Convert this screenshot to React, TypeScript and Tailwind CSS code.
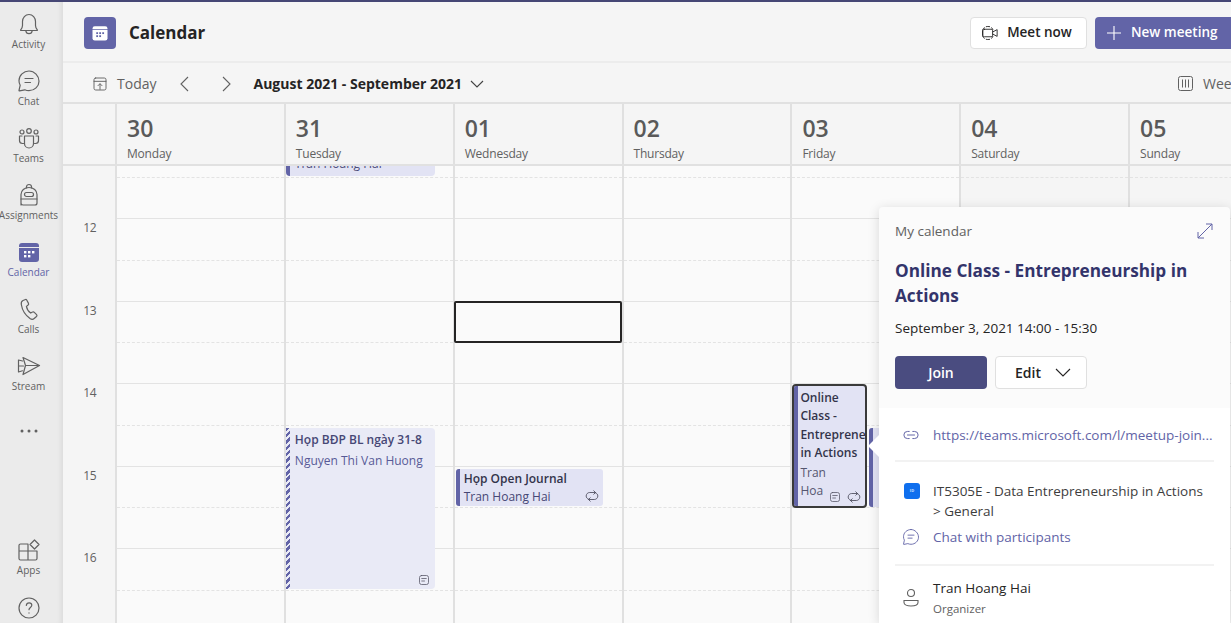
import type { ReactNode } from "react";

const gray = "#616161";

function Glyph({ size = 24, color = gray, sw = 1.2, children }: { size?: number; color?: string; sw?: number; children: ReactNode }) {
  return (
    <svg width={size} height={size} viewBox="0 0 24 24" fill="none" stroke={color} strokeWidth={sw} strokeLinecap="round" strokeLinejoin="round">
      {children}
    </svg>
  );
}

const BellIcon = () => (
  <Glyph>
    <path d="M4 18.500h16c.4 0 .5-.4.3-.7-1.200-1.400-1.800-2.600-1.800-4.300V9.500C18.500 5.600 15.700 2.500 12 2.500S5.500 5.600 5.500 9.500v4c0 1.700-.6 2.900-1.800 4.300-.2.3-.1.7.3.7Z" />
    <path d="M8.800 18.700c.2 1.800 1.500 3 3.200 3s3-1.200 3.200-3" />
  </Glyph>
);

const ChatIcon = ({ color = gray, size = 24 }: { color?: string; size?: number }) => (
  <Glyph color={color} size={size}>
    <path d="M12 2C6.500 2 2 6.300 2 11.700c0 1.600.4 3.200 1.200 4.500L2 21.500c0 .3.200.5.500.4l5.300-1.100c1.300.6 2.700.9 4.200.9 5.500 0 10-4.300 10-9.500S17.500 2 12 2Z" />
    <path d="M8 9.500h8M8 13.500h5.500" />
  </Glyph>
);

const TeamsIcon = () => (
  <Glyph>
    <circle cx="12" cy="5" r="2.300" />
    <circle cx="5" cy="6" r="2" />
    <circle cx="19" cy="6" r="2" />
    <path d="M7.500 10h9v7.500c0 2.500-2 4.500-4.500 4.500s-4.500-2-4.500-4.500V10Z" />
    <path d="M5 10H2.500v4.500c0 1.700 1.300 3 3 3h1M19 10h2.500v4.500c0 1.700-1.300 3-3 3h-1" />
  </Glyph>
);

const BagIcon = () => (
  <Glyph>
    <path d="M9.500 5V3.800C9.500 2.500 10.600 1.500 12 1.500s2.500 1 2.500 2.300V5" />
    <path d="M4 22V11.500C4 7.500 7.500 4.500 12 4.500s8 3 8 7V20c0 1.100-.9 2-2 2H6c-1.100 0-2-.9-2-2Z" />
    <rect x="7.500" y="9.500" width="9" height="4" rx="2" />
    <path d="M4 16h16" />
  </Glyph>
);

const CalendarGlyph = ({ size = 24, body = "#6264a7", dots = "#fff" }: { size?: number; body?: string; dots?: string }) => (
  <svg width={size} height={size} viewBox="0 0 24 24">
    <path d="M2 6a3 3 0 0 1 3-3h14a3 3 0 0 1 3 3v1H2V6Z" fill={body} />
    <path d="M2 8h20v11a3 3 0 0 1-3 3H5a3 3 0 0 1-3-3V8Z" fill={body} />
    <g fill={dots}>
      <rect x="7" y="11" width="2.400" height="2.400" />
      <rect x="11" y="11" width="2.400" height="2.400" />
      <rect x="15" y="11" width="2.400" height="2.400" />
      <rect x="7" y="15" width="2.400" height="2.400" />
      <rect x="11" y="15" width="2.400" height="2.400" />
    </g>
  </svg>
);

const PhoneIcon = () => (
  <Glyph>
    <path d="M8.500 2.500 6 3.500C4.500 4.300 4 5.700 4.300 7.500c.8 5 4.500 11 8.700 14 1.500 1 3 1 4.200 0l2.300-2c.6-.6.6-1.300.1-1.900l-2.300-2.300c-.5-.5-1.200-.6-1.800-.2l-1.800 1c-2.200-1.500-3.800-4.100-4.300-6.700l1.700-1.300c.5-.4.7-1.100.4-1.700L9.700 3c-.3-.5-.7-.7-1.200-.5Z" />
  </Glyph>
);

const StreamIcon = () => (
  <Glyph>
    <path d="M6 3.500 22.500 11.500 6 20.500l2.500-9L6 3.500Z" />
    <path d="M8.500 11.500h14M5.500 7 1.500 6v12l4-1.200M1.500 12h5" />
  </Glyph>
);

const AppsIcon = () => (
  <Glyph>
    <path d="M11 6H3.500C2.700 6 2 6.700 2 7.500V20.500C2 21.300 2.700 22 3.500 22H18.500c.8 0 1.500-.7 1.500-1.500V13H11V6ZM2 13h9M11 13v9" />
    <path d="m17.500 2 4.500 4.500-4.500 4.500L13 6.500 17.500 2Z" />
  </Glyph>
);

const HelpIcon = () => (
  <Glyph>
    <circle cx="12" cy="12" r="10" />
    <path d="M9.300 9.300c.2-1.500 1.300-2.500 2.800-2.500s2.700 1 2.700 2.400c0 2.200-2.800 2.300-2.800 4.500" />
    <path d="M12 16.800v.3" />
  </Glyph>
);

const TodayIcon = () => (
  <Glyph size={16} sw={1.4}>
    <rect x="3" y="3" width="18" height="18" rx="2.500" />
    <path d="M3 8h18M12 20v-8M9 14.500l3-3 3 3" />
  </Glyph>
);

const VideoIcon = () => (
  <Glyph size={18} color="#252424" sw={1.2}>
    <path d="M4.500 5C3 6 2 7 2 8.500v7c0 1.500 1 2.500 2.500 3.500M7 3.500c1-.3 3-.3 4.500 0M7 20.500c1 .3 3 .3 4.500 0M14 5c1.200.6 1.800 1.500 1.800 2.500M15.800 16.500c0 1-.6 1.900-1.800 2.500" />
    <rect x="2.500" y="7" width="13" height="10" rx="2" />
    <path d="m15.800 10.500 5.700-3v9l-5.700-3" />
  </Glyph>
);

const NoteIcon = ({ size = 12 }: { size?: number }) => (
  <Glyph size={size} sw={1.600} color="#5b5b6b">
    <rect x="3" y="3" width="18" height="18" rx="4" />
    <path d="M7.500 9h9M7.500 14h5.500" />
  </Glyph>
);

const RepeatIcon = () => (
  <Glyph size={14} sw={1.500} color="#4f4f5f">
    <path d="M6 17.500C3.500 16.500 2 14.500 2 12c0-3.300 2.700-6 6-6h10" />
    <path d="m15 3 3 3-3 3" />
    <path d="M18 6.500c2.500 1 4 3 4 5.500 0 3.300-2.700 6-6 6H6" />
    <path d="m9 15-3 3 3 3" />
  </Glyph>
);

const railItems = [
  { label: "Activity", icon: <BellIcon /> },
  { label: "Chat", icon: <ChatIcon /> },
  { label: "Teams", icon: <TeamsIcon /> },
  { label: "Assignments", icon: <BagIcon /> },
  { label: "Calendar", icon: <CalendarGlyph />, active: true },
  { label: "Calls", icon: <PhoneIcon /> },
  { label: "Stream", icon: <StreamIcon /> },
];

const days = [
  { num: "30", name: "Monday" },
  { num: "31", name: "Tuesday" },
  { num: "01", name: "Wednesday" },
  { num: "02", name: "Thursday" },
  { num: "03", name: "Friday" },
  { num: "04", name: "Saturday", weekend: true },
  { num: "05", name: "Sunday", weekend: true },
];

const halfHours = [0, 1, 2, 3, 4, 5, 6, 7, 8, 9, 10];

function Rail() {
  return (
    <aside className="flex w-[63px] shrink-0 flex-col items-center bg-[#ebebeb] pr-[6px] shadow-[inset_-5px_0_5px_-3px_rgba(0,0,0,0.07)]">
      <div className="mt-[10px] flex w-full flex-col">
        {railItems.map((item) => (
          <div key={item.label} className="flex h-[57px] flex-col items-center">
            {item.icon}
            <span className={`mt-[1px] whitespace-nowrap text-[10px] leading-[14px] ${item.active ? "text-[#6264a7]" : "text-[#616161]"}`}>{item.label}</span>
          </div>
        ))}
      </div>
      <div className="mt-[18px] text-[#616161]">
        <svg width="18" height="4" viewBox="0 0 18 4" fill="currentColor">
          <circle cx="2" cy="2" r="1.500" />
          <circle cx="9" cy="2" r="1.500" />
          <circle cx="16" cy="2" r="1.500" />
        </svg>
      </div>
      <div className="mt-[105px] flex flex-col items-center">
        <AppsIcon />
        <span className="mt-[1px] text-[10px] leading-[14px] text-[#616161]">Apps</span>
      </div>
      <div className="mt-[19px]">
        <HelpIcon />
      </div>
    </aside>
  );
}

function Header() {
  return (
    <header className="flex h-[61px] shrink-0 items-center border-b-2 border-[#ececec] pl-[21px] pt-[2px]">
      <div className="flex h-[32px] w-[32px] items-center justify-center rounded-[4px] bg-[#6264a7]">
        <CalendarGlyph size={18} body="#fff" dots="#6264a7" />
      </div>
      <h1 className="ml-[13px] mt-[1px] text-[17px] font-bold text-[#252424]">Calendar</h1>
      <button className="ml-auto flex h-[32px] w-[117px] items-center justify-center gap-[8px] rounded-[4px] border border-[#e0e0e0] bg-white pr-[4px] text-[13.5px] font-semibold text-[#252424]">
        <VideoIcon />
        Meet now
      </button>
      <button className="ml-[8px] flex h-[32px] w-[136px] items-center gap-[9px] rounded-l-[4px] bg-[#6264a7] pl-[11px] text-[13.5px] font-semibold text-white">
        <svg width="16" height="16" viewBox="0 0 16 16" stroke="#fff" strokeWidth="1.100">
          <path d="M8 1v14M1 8h14" />
        </svg>
        New meeting
      </button>
    </header>
  );
}

function Toolbar() {
  return (
    <div className="flex h-[41px] shrink-0 items-center overflow-hidden border-b-2 border-[#e1e1e1] pl-[29px] pt-[2px] text-[#616161]">
      <TodayIcon />
      <span className="ml-[9px] text-[14px]">Today</span>
      <svg className="ml-[22px]" width="10" height="16" viewBox="0 0 10 16" fill="none" stroke="#616161" strokeWidth="1.100">
        <path d="M9 1 2 8l7 7" />
      </svg>
      <svg className="ml-[33px]" width="10" height="16" viewBox="0 0 10 16" fill="none" stroke="#616161" strokeWidth="1.100">
        <path d="m1 1 7 7-7 7" />
      </svg>
      <span className="ml-[22px] text-[14px] font-bold text-[#252424]">August 2021 - September 2021</span>
      <svg className="ml-[8px]" width="14" height="8" viewBox="0 0 14 8" fill="none" stroke="#424242" strokeWidth="1.100">
        <path d="m1 1 6 6 6-6" />
      </svg>
      <div className="ml-auto mr-[-8px] flex shrink-0 items-center gap-[10px]">
        <svg width="15" height="15" viewBox="0 0 15 15" fill="none" stroke="#616161">
          <rect x="0.500" y="0.500" width="14" height="14" rx="2" />
          <path d="M4.500 3.500v8M7.500 3.500v8M10.500 3.500v8" />
        </svg>
        <span className="text-[14px]">Week</span>
      </div>
    </div>
  );
}

function DayHeaders() {
  return (
    <div className="grid h-[62px] shrink-0 grid-cols-[52px_repeat(7,168.85px)] border-b-2 border-[#e1e1e1]">
      <div />
      {days.map((d) => (
        <div key={d.num} className="border-l-2 border-[#e0e0e0] pl-[10px] pt-[8px] text-[#616161]">
          <div className="text-[23px] font-semibold leading-[32px] text-[#5a5a5a]">{d.num}</div>
          <div className="mt-[1px] text-[12px] leading-[17px] tracking-[-0.2px]">{d.name}</div>
        </div>
      ))}
    </div>
  );
}

function DayColumn({ weekend, children }: { weekend?: boolean; children?: ReactNode }) {
  return (
    <div className={`relative border-l-2 border-[#e0e0e0] ${weekend ? "bg-[#f5f5f5]" : "bg-[#fafafa]"}`}>
      <div className="h-[12px] border-b border-dashed border-[#e3e3e3]" />
      {halfHours.map((n) => (
        <div key={n} className={`h-[41.25px] border-b border-[#e3e3e3] ${n % 2 === 0 ? "border-solid" : "border-dashed"}`} />
      ))}
      {children}
    </div>
  );
}

function CalendarGrid() {
  return (
    <div className="grid min-h-0 flex-1 grid-cols-[52px_repeat(7,168.85px)] overflow-hidden">
      <div className="pt-[52px] text-right">
        {["12", "13", "14", "15", "16"].map((h) => (
          <div key={h} className="h-[82.5px] pr-[19px] pt-[1px] text-[12px] leading-[18px] tracking-[-0.5px] text-[#616161]">
            {h}
          </div>
        ))}
      </div>
      <DayColumn />
      <DayColumn>
        <div className="absolute left-0 top-0 flex h-[10px] w-[149px] overflow-hidden rounded-b-[4px] bg-[#e2e3f4]">
          <div className="w-[4px] shrink-0 bg-[#6264a7]" />
          <div className="ml-[5px] mt-[-11px] text-[12px] leading-[18px] text-[#4a4b78]">Tran Hoang Hai</div>
        </div>
        <div className="absolute left-0 top-[262px] flex h-[161px] w-[149px] rounded-r-[4px] bg-[#e9eaf6]">
          <div className="w-[4px] shrink-0 bg-[repeating-linear-gradient(135deg,#6264a7_0,#6264a7_2.500px,#e9eaf6_2.500px,#e9eaf6_4.500px)]" />
          <div className="pl-[5px] pt-[3px]">
            <div className="text-[12px] font-semibold leading-[18px] text-[#464775]">Họp BĐP BL ngày 31-8</div>
            <div className="mt-[3px] text-[12px] leading-[18px] text-[#585a96]">Nguyen Thi Van Huong</div>
          </div>
          <div className="absolute bottom-[3px] right-[5px]">
            <NoteIcon />
          </div>
        </div>
      </DayColumn>
      <DayColumn>
        <div className="absolute left-[1px] top-[303px] flex h-[37px] w-[147px] rounded-[3px] bg-[#e2e3f4]">
          <div className="w-[4px] shrink-0 rounded-l-[3px] bg-[#6264a7]" />
          <div className="pl-[4px] pt-[1px]">
            <div className="text-[12px] font-semibold leading-[18px] text-[#33344a]">Họp Open Journal</div>
            <div className="text-[12px] leading-[18px] text-[#464775]">Tran Hoang Hai</div>
          </div>
          <div className="absolute bottom-[3px] right-[4px]">
            <RepeatIcon />
          </div>
        </div>
        <div className="absolute left-[-1px] top-[135px] h-[42px] w-[168px] rounded-[2px] border-2 border-[#252424]" />
      </DayColumn>
      <DayColumn />
      <DayColumn>
        <div className="absolute left-0 top-[218px] flex h-[124px] w-[75px] overflow-hidden rounded-[4px] border-2 border-[#3a3a3a] bg-[#e2e3f4]">
          <div className="w-[4px] shrink-0 bg-[#6264a7]" />
          <div className="min-w-0 flex-1 overflow-hidden whitespace-nowrap pl-[2px] pt-[3px] text-[12px] leading-[18.4px]">
            <div className="font-semibold text-[#33344a]">Online</div>
            <div className="font-semibold text-[#33344a]">Class -</div>
            <div className="font-semibold text-[#33344a]">Entrepreneurship</div>
            <div className="font-semibold text-[#33344a]">in Actions</div>
            <div className="mt-[1px] text-[#55566f]">Tran</div>
            <div className="text-[#55566f]">Hoa</div>
          </div>
          <div className="absolute bottom-[2px] right-[4px] flex items-center gap-[6px] bg-[#e2e3f4]">
            <NoteIcon />
            <RepeatIcon />
          </div>
        </div>
        <div className="absolute left-[77px] top-[262px] flex h-[79px] w-[40px] rounded-[3px] bg-[#e2e3f4]">
          <div className="w-[4px] rounded-l-[3px] bg-[#6264a7]" />
        </div>
      </DayColumn>
      <DayColumn weekend />
      <DayColumn weekend />
    </div>
  );
}

function Popover() {
  return (
    <div className="absolute bottom-0 left-[879px] top-[207px] w-[351px] rounded-t-[4px] bg-[#fbfbfb] shadow-[0_2px_12px_rgba(0,0,0,0.14)]">
      <div className="absolute left-[-11px] top-[228px] h-0 w-0 border-y-[11px] border-r-[11px] border-y-transparent border-r-white" />
      <div className="px-[16px] pt-[14px]">
        <div className="flex items-start justify-between">
          <span className="text-[13.5px] leading-[20px] text-[#616161]">My calendar</span>
          <svg className="mr-[1px] mt-[2px]" width="16" height="16" viewBox="0 0 16 16" fill="none" stroke="#6264a7" strokeWidth="1">
            <path d="M1 15 15 1M9 1h6v6M1 9v6h6" />
          </svg>
        </div>
        <h2 className="mt-[17px] text-[17.2px] font-bold leading-[25px] text-[#33346b]">Online Class - Entrepreneurship in Actions</h2>
        <div className="mt-[10px] text-[13.5px] leading-[20px] text-[#252424]">September 3, 2021 14:00 - 15:30</div>
        <div className="mt-[18px] flex gap-[8px]">
          <button className="h-[33px] w-[92px] rounded-[4px] bg-[#4a4c80] text-[14px] font-semibold text-white">Join</button>
          <button className="flex h-[33px] w-[92px] items-center justify-center gap-[14px] rounded-[4px] border border-[#e0e0e0] bg-white pl-[4px] text-[14px] font-semibold text-[#252424]">
            Edit
            <svg width="16" height="9" viewBox="0 0 16 9" fill="none" stroke="#252424" strokeWidth="1.100">
              <path d="m1 1 7 7 7-7" />
            </svg>
          </button>
        </div>
      </div>
      <div className="mt-[19px] h-[215px] bg-white px-[16px] pt-[15px]">
        <div className="flex items-center gap-[14px] border-b-2 border-[#f2f2f2] pb-[15px] pt-[2px]">
          <span className="ml-[8px] flex w-[16px] justify-center">
            <svg width="18" height="10" viewBox="0 0 18 10" fill="none" stroke="#6264a7" strokeWidth="1.100" strokeLinecap="round">
              <path d="M7 1H5a4 4 0 0 0 0 8h2M11 1h2a4 4 0 0 1 0 8h-2M5 5h8" />
            </svg>
          </span>
          <span className="whitespace-nowrap text-[13.5px] leading-[20px] text-[#6264a7]">https://teams.microsoft.com/l/meetup-join...</span>
        </div>
        <div className="mt-[19px] flex gap-[13px]">
          <span className="ml-[9px] mt-[2px] flex h-[16px] w-[16px] shrink-0 items-center justify-center rounded-[3px] bg-[#0f6fee] text-[4px] font-bold text-[#cfe2ff]">ID</span>
          <div className="w-[276px] text-[13.5px] leading-[20px] text-[#3d3d3d]">IT5305E - Data Entrepreneurship in Actions &gt; General</div>
        </div>
        <div className="mt-[6px] flex items-center gap-[13px] border-b-2 border-[#f2f2f2] pb-[17px]">
          <span className="ml-[7px]">
            <ChatIcon color="#6264a7" size={18} />
          </span>
          <span className="text-[13.5px] leading-[20px] text-[#6264a7]">Chat with participants</span>
        </div>
        <div className="mt-[12px] flex items-center gap-[13px]">
          <span className="ml-[7px]">
            <svg width="18" height="20" viewBox="0 0 18 20" fill="none" stroke="#616161" strokeWidth="1.100">
              <circle cx="9" cy="5" r="3.500" />
              <path d="M2 12.500h14v2c0 2-3 3.500-7 3.500s-7-1.500-7-3.500v-2Z" />
            </svg>
          </span>
          <div>
            <div className="text-[13.5px] leading-[20px] text-[#252424]">Tran Hoang Hai</div>
            <div className="mt-[3px] text-[11.5px] leading-[16px] text-[#616161]">Organizer</div>
          </div>
        </div>
      </div>
    </div>
  );
}

export default function App() {
  return (
    <div className="relative flex h-[623px] w-[1231px] flex-col overflow-hidden bg-[#f5f5f5] font-['Open_Sans','Noto_Sans',sans-serif]">
      <div className="h-[2px] shrink-0 bg-[#464775]" />
      <div className="flex min-h-0 flex-1">
        <Rail />
        <main className="flex min-w-0 flex-1 flex-col">
          <Header />
          <Toolbar />
          <DayHeaders />
          <CalendarGrid />
        </main>
      </div>
      <Popover />
    </div>
  );
}
